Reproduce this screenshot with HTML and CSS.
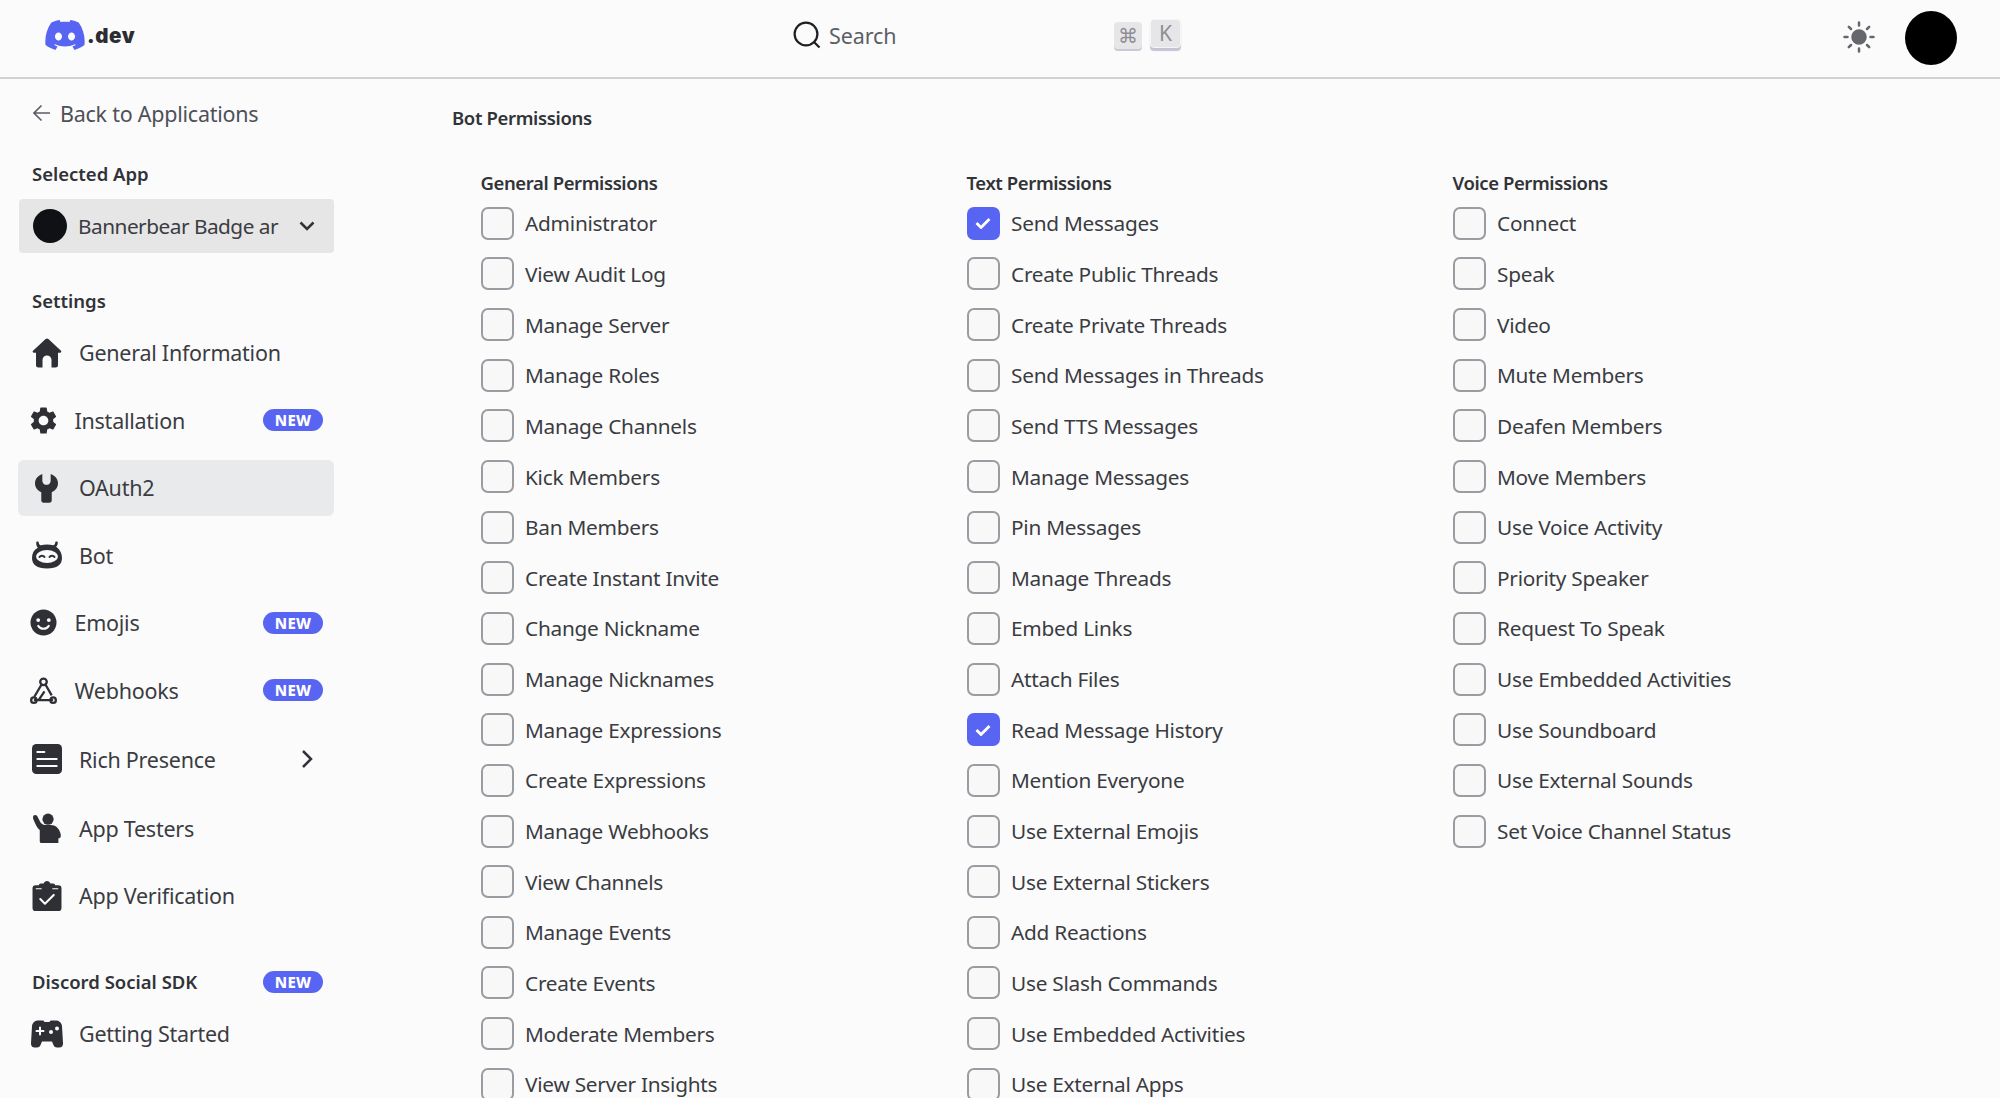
FILE: index.html
```html
<!DOCTYPE html>
<html lang="en">
<head>
    <meta charset="UTF-8">
    <title>Bot Permissions</title>
    <link rel="stylesheet" href="styles.css">
</head>
<body>
    <header class="topbar">
        <div class="logo">
            <svg class="logo-mark" viewBox="0 0 24 18.3"><path transform="translate(0 -2.9)" d="M20.317 4.3698a19.7913 19.7913 0 00-4.8851-1.5152.0741.0741 0 00-.0785.0371c-.211.3753-.4447.8648-.6083 1.2495-1.8447-.2762-3.68-.2762-5.4868 0-.1636-.3933-.4058-.8742-.6177-1.2495a.077.077 0 00-.0785-.037 19.7363 19.7363 0 00-4.8852 1.515.0699.0699 0 00-.0321.0277C.5334 9.0458-.319 13.5799.0992 18.0578a.0824.0824 0 00.0312.0561c2.0528 1.5076 4.0413 2.4228 5.9929 3.0294a.0777.0777 0 00.0842-.0276c.4616-.6304.8731-1.2952 1.226-1.9942a.076.076 0 00-.0416-.1057c-.6528-.2476-1.2743-.5495-1.8722-.8923a.077.077 0 01-.0076-.1277c.1258-.0943.2517-.1923.3718-.2914a.0743.0743 0 01.0776-.0105c3.9278 1.7933 8.18 1.7933 12.0614 0a.0739.0739 0 01.0785.0095c.1202.099.246.1981.3728.2924a.077.077 0 01-.0066.1276 12.2986 12.2986 0 01-1.8732.8914.0766.0766 0 00-.0407.1067c.3604.698.7719 1.3628 1.225 1.9932a.076.076 0 00.0842.0286c1.961-.6067 3.9495-1.5219 6.0023-3.0294a.077.077 0 00.0313-.0552c.5004-5.177-.8382-9.6739-3.5485-13.6604a.061.061 0 00-.0312-.0286zM8.02 15.3312c-1.1825 0-2.1569-1.0857-2.1569-2.419 0-1.3332.9555-2.4189 2.157-2.4189 1.2108 0 2.1757 1.0952 2.1568 2.419 0 1.3332-.9555 2.4189-2.1569 2.4189zm7.9748 0c-1.1825 0-2.1569-1.0857-2.1569-2.419 0-1.3332.9554-2.4189 2.1569-2.4189 1.2108 0 2.1757 1.0952 2.1568 2.419 0 1.3332-.946 2.4189-2.1568 2.4189Z"/></svg>
            <span class="logo-text">.dev</span>
        </div>
        <div class="search">
            <svg class="search-icon" viewBox="0 0 28 28"><circle cx="13" cy="13" r="11.4"/><path d="M21 21l5.5 5.5"/></svg>
            <span class="search-label">Search</span>
        </div>
        <div class="keys">
            <span class="key">⌘</span>
            <span class="key key-raised">K</span>
        </div>
        <div class="topbar-right">
            <svg class="sun" viewBox="0 0 32 32"><circle cx="16" cy="16" r="6.500"/><path d="M16 1.500v3M16 27.500v3M1.500 16h3M27.500 16h3M5.800 5.800l2.200 2.200M24 24l2.200 2.200M5.800 26.200l2.200-2.200M24 8l2.200-2.200"/></svg>
            <span class="avatar"></span>
        </div>
    </header>

    <div class="page">
        <aside class="sidebar">
            <div class="back">
                <svg class="back-arrow" viewBox="0 0 18 18"><path d="M17 9H1.500M8.500 1.500L1 9l7.500 7.500"/></svg>
                <span>Back to Applications</span>
            </div>

            <h4 class="side-heading heading-app">Selected App</h4>
            <div class="app-select">
                <span class="app-avatar"></span>
                <span class="app-name">Bannerbear Badge ar</span>
                <svg class="chevron-down" viewBox="0 0 16 10"><path d="M1.500 1.500L8 8l6.500-6.500"/></svg>
            </div>

            <h4 class="side-heading heading-settings">Settings</h4>
            <nav class="nav">
                <div class="nav-item">
                    <svg class="nav-icon" viewBox="0 0 30 30"><path d="M15 .5c.5 0 1 .2 1.400.6L29 12.800c.7.7.2 2-.8 2H26V27a2.500 2.500 0 0 1-2.500 2.500H19.500v-7.500a4.500 4.500 0 0 0-9 0v7.500H6.500A2.500 2.500 0 0 1 4 27V14.800H1.800c-1 0-1.500-1.300-.8-2L13.600 1.100c.4-.4.900-.6 1.400-.6z"/></svg>
                    <span>General Information</span>
                </div>
                <div class="nav-item nav-item-small">
                    <svg class="nav-icon" viewBox="2 2 20 20"><path d="M19.140 12.940c.04-.3.06-.61.06-.94 0-.32-.02-.64-.07-.94l2.030-1.580c.18-.14.23-.41.12-.61l-1.920-3.320c-.12-.22-.37-.29-.59-.22l-2.390.96c-.5-.38-1.030-.7-1.620-.94l-.36-2.540c-.04-.24-.24-.41-.48-.41h-3.840c-.24 0-.43.17-.47.41l-.36 2.540c-.59.24-1.130.57-1.620.94l-2.390-.96c-.22-.08-.47 0-.59.22L2.740 8.870c-.12.21-.08.47.12.61l2.030 1.580c-.05.3-.09.63-.09.94s.02.64.07.94l-2.030 1.580c-.18.14-.23.41-.12.61l1.920 3.320c.12.22.37.29.59.22l2.390-.96c.5.38 1.030.7 1.620.94l.36 2.540c.05.24.24.41.48.41h3.840c.24 0 .44-.17.47-.41l.36-2.540c.59-.24 1.130-.56 1.620-.94l2.390.96c.22.08.47 0 .59-.22l1.920-3.320c.12-.22.07-.47-.12-.61l-2.010-1.580zM12 15.600c-1.980 0-3.600-1.620-3.600-3.600s1.620-3.600 3.600-3.600 3.600 1.620 3.600 3.600-1.620 3.600-3.600 3.600z"/></svg>
                    <span>Installation</span>
                    <span class="badge">NEW</span>
                </div>
                <div class="nav-item nav-item-active">
                    <svg class="nav-icon nav-icon-wrench" viewBox="0 0 22 28"><path d="M7 .5V7a4 4 0 0 0 8 0V.5c4 1.500 7 4.500 7 9 0 4-2.500 7-6 8.500v8a2 2 0 0 1-2 2H8a2 2 0 0 1-2-2v-8C2.500 16.500 0 13.500 0 9.500 0 5 3 2 7 .5z"/></svg>
                    <span>OAuth2</span>
                </div>
                <div class="nav-item">
                    <svg class="nav-icon" viewBox="0 0 30 27"><path d="M5.500 0c.8 0 1.300.6 1.300 1.200 0 1.200.7 2.200 2 2.600C10.600 3.300 12.700 3 15 3s4.400.3 6.200.8c1.300-.4 2-1.400 2-2.600 0-.6.5-1.200 1.300-1.200s1.300.6 1.300 1.200c0 1.500-.6 3-1.700 4C28 8.200 30 11.700 30 16.500 30 23 25 27 15 27S0 23 0 16.500c0-4.800 2-8.300 5.900-10.300C4.800 5.200 4.200 3.700 4.200 1.200 4.200.6 4.700 0 5.500 0z"/><ellipse class="cut" cx="15" cy="15" rx="11" ry="6.500"/><path class="eye" d="M7.500 15.500c1-1.800 4-1.800 5 0M17.500 15.500c1-1.800 4-1.800 5 0"/></svg>
                    <span>Bot</span>
                </div>
                <div class="nav-item nav-item-small">
                    <svg class="nav-icon" viewBox="0 0 28 28"><circle cx="14" cy="14" r="13.500"/><circle class="cut" cx="8.500" cy="11.500" r="2"/><circle class="cut" cx="19.500" cy="11.500" r="2"/><path class="smile" d="M8.500 17.500c2.500 4 8.500 4 11 0"/></svg>
                    <span>Emojis</span>
                    <span class="badge">NEW</span>
                </div>
                <div class="nav-item nav-item-small">
                    <svg class="nav-icon nav-icon-line" viewBox="0 0 28 28"><circle cx="14" cy="5" r="3.400"/><circle cx="4" cy="24" r="2.800"/><circle cx="24" cy="24" r="2.800"/><path d="M12 7.800L4.500 20.500M16 7.800l6.500 11.200M4 24h20M9 24l6-9"/></svg>
                    <span>Webhooks</span>
                    <span class="badge">NEW</span>
                </div>
                <div class="nav-item nav-item-push">
                    <svg class="nav-icon" viewBox="0 0 28 28"><path d="M4 0h20a4 4 0 0 1 4 4v20a4 4 0 0 1-4 4H4a4 4 0 0 1-4-4V4a4 4 0 0 1 4-4z"/><path class="smile" d="M5 7.500h6.500M5 14h18M5 20.500h18"/></svg>
                    <span>Rich Presence</span>
                    <svg class="chevron-right" viewBox="0 0 12 20"><path d="M2 2l8 8-8 8"/></svg>
                </div>
                <div class="nav-item nav-item-push">
                    <svg class="nav-icon" viewBox="0 0 28 29"><circle cx="15" cy="6" r="5.400"/><path d="M1 2.500c.9-.9 2.700-.8 3.500.3l3 6c.8 1.300 2 2.400 4 2.700h6c5 0 8 3 9.500 8 .4 1.600.4 2.500.2 3.500-.3 1-1.200 1.500-2.200 1.500v4.500H8.500c-.8 0-1.500-.7-1.500-1.500v-11C4.800 15 2.800 11 .7 5.800.4 4.700.4 3.300 1 2.500z"/></svg>
                    <span>App Testers</span>
                </div>
                <div class="nav-item">
                    <svg class="nav-icon" viewBox="0 0 28 29"><path d="M14 0c1.500 0 2.800 1 3.300 2.300H20c1 0 1.800.7 1.800 1.700H25a3 3 0 0 1 3 3v19a3 3 0 0 1-3 3H3a3 3 0 0 1-3-3V7a3 3 0 0 1 3-3h3.200c0-1 .8-1.700 1.800-1.700h2.700C11.200 1 12.500 0 14 0z"/><path class="smile" d="M7.500 17.500l4.500 4.500 8.500-8.500"/><path class="smile thin" d="M3.500 7.500h5M19.500 7.500h5"/></svg>
                    <span>App Verification</span>
                </div>
            </nav>

            <div class="side-heading-row">
                <h4 class="side-heading">Discord Social SDK</h4>
                <span class="badge">NEW</span>
            </div>
            <div class="nav-item nav-item-sdk">
                <svg class="nav-icon nav-icon-pad" viewBox="0 0 32 28"><path d="M7.500.5h4c1 0 1.700.6 2 1.500h5c.3-.9 1-1.500 2-1.500h4C28 .5 30.500 2.500 31 6l1 17c.2 3-1.500 4.500-3.500 4.500H26c-2 0-3-1-3.500-2.500l-1.500-3.500H11L9.500 25C9 26.500 8 27.500 6 27.500H3.500C1.500 27.500-.2 26 0 23L1 6C1.500 2.500 4 .500 7.500.5z"/><path class="smile" d="M5.500 11h7M9 7.500v7"/><circle class="cut" cx="20" cy="12" r="2"/><circle class="cut" cx="26" cy="8.500" r="2"/></svg>
                <span>Getting Started</span>
            </div>
        </aside>

        <main class="content">
            <h4 class="perm-title">Bot Permissions</h4>
            <div class="perm-grid">
                <section class="perm-col">
                    <h4 class="perm-heading">General Permissions</h4>
                    <label class="perm"><span class="box"></span>Administrator</label>
                    <label class="perm"><span class="box"></span>View Audit Log</label>
                    <label class="perm"><span class="box"></span>Manage Server</label>
                    <label class="perm"><span class="box"></span>Manage Roles</label>
                    <label class="perm"><span class="box"></span>Manage Channels</label>
                    <label class="perm"><span class="box"></span>Kick Members</label>
                    <label class="perm"><span class="box"></span>Ban Members</label>
                    <label class="perm"><span class="box"></span>Create Instant Invite</label>
                    <label class="perm"><span class="box"></span>Change Nickname</label>
                    <label class="perm"><span class="box"></span>Manage Nicknames</label>
                    <label class="perm"><span class="box"></span>Manage Expressions</label>
                    <label class="perm"><span class="box"></span>Create Expressions</label>
                    <label class="perm"><span class="box"></span>Manage Webhooks</label>
                    <label class="perm"><span class="box"></span>View Channels</label>
                    <label class="perm"><span class="box"></span>Manage Events</label>
                    <label class="perm"><span class="box"></span>Create Events</label>
                    <label class="perm"><span class="box"></span>Moderate Members</label>
                    <label class="perm"><span class="box"></span>View Server Insights</label>
                </section>
                <section class="perm-col">
                    <h4 class="perm-heading">Text Permissions</h4>
                    <label class="perm"><span class="box box-checked"><svg viewBox="0 0 16 12"><path d="M1.500 6l4.500 4.500 8.500-8.500"/></svg></span>Send Messages</label>
                    <label class="perm"><span class="box"></span>Create Public Threads</label>
                    <label class="perm"><span class="box"></span>Create Private Threads</label>
                    <label class="perm"><span class="box"></span>Send Messages in Threads</label>
                    <label class="perm"><span class="box"></span>Send TTS Messages</label>
                    <label class="perm"><span class="box"></span>Manage Messages</label>
                    <label class="perm"><span class="box"></span>Pin Messages</label>
                    <label class="perm"><span class="box"></span>Manage Threads</label>
                    <label class="perm"><span class="box"></span>Embed Links</label>
                    <label class="perm"><span class="box"></span>Attach Files</label>
                    <label class="perm"><span class="box box-checked"><svg viewBox="0 0 16 12"><path d="M1.500 6l4.500 4.500 8.500-8.500"/></svg></span>Read Message History</label>
                    <label class="perm"><span class="box"></span>Mention Everyone</label>
                    <label class="perm"><span class="box"></span>Use External Emojis</label>
                    <label class="perm"><span class="box"></span>Use External Stickers</label>
                    <label class="perm"><span class="box"></span>Add Reactions</label>
                    <label class="perm"><span class="box"></span>Use Slash Commands</label>
                    <label class="perm"><span class="box"></span>Use Embedded Activities</label>
                    <label class="perm"><span class="box"></span>Use External Apps</label>
                </section>
                <section class="perm-col">
                    <h4 class="perm-heading">Voice Permissions</h4>
                    <label class="perm"><span class="box"></span>Connect</label>
                    <label class="perm"><span class="box"></span>Speak</label>
                    <label class="perm"><span class="box"></span>Video</label>
                    <label class="perm"><span class="box"></span>Mute Members</label>
                    <label class="perm"><span class="box"></span>Deafen Members</label>
                    <label class="perm"><span class="box"></span>Move Members</label>
                    <label class="perm"><span class="box"></span>Use Voice Activity</label>
                    <label class="perm"><span class="box"></span>Priority Speaker</label>
                    <label class="perm"><span class="box"></span>Request To Speak</label>
                    <label class="perm"><span class="box"></span>Use Embedded Activities</label>
                    <label class="perm"><span class="box"></span>Use Soundboard</label>
                    <label class="perm"><span class="box"></span>Use External Sounds</label>
                    <label class="perm"><span class="box"></span>Set Voice Channel Status</label>
                </section>
            </div>
        </main>
    </div>
</body>
</html>
```

FILE: styles.css
```css
* { box-sizing: border-box; }
html, body { height: 100%; }
body {
    margin: 0;
    height: 1098px;
    overflow: hidden;
    background: #fbfbfb;
    color: #313338;
    font-family: "Noto Sans", "Open Sans", sans-serif;
    font-size: 21px;
}
h4 { margin: 0; }

/* top bar */
.topbar {
    display: flex;
    align-items: center;
    height: 79px;
    padding: 0 43px 0 45px;
    border-bottom: 2px solid #d2d2d3;
}
.logo { display: flex; align-items: center; width: 748px; margin-top: -7px; }
.logo-mark { width: 40px; height: 30px; fill: #5865f2; }
.logo-text { margin-left: 2px; font-family: "Inter", sans-serif; font-size: 20.500px; font-weight: 900; letter-spacing: .6px; color: #2b2d31; }
.search { display: flex; align-items: center; width: 321px; margin-top: -7px; }
.search-icon { width: 28px; height: 28px; fill: none; stroke: #1e1f22; stroke-width: 2.200; }
.search-label { margin-left: 8px; color: #5c5e66; font-size: 21.500px; letter-spacing: -.1px; }
.keys { display: flex; align-items: flex-start; gap: 8px; margin-top: -10px; }
.key {
    display: flex;
    align-items: center;
    justify-content: center;
    width: 28px;
    height: 27px;
    margin-top: 3px;
    border-radius: 4px;
    background: #e6e6e8;
    box-shadow: 0 2px 0 #c9c9d8;
    color: #8e8f95;
    font-size: 20px;
}
.key-raised { width: 31px; height: 29px; margin-top: 0; border: 1px solid #f5f5f5; box-shadow: 0 3px 1px #c4c4d4; font-size: 21px; }
.topbar-right { display: flex; align-items: center; gap: 29px; margin-left: auto; }
.sun { width: 32px; height: 32px; fill: #66676d; stroke: #66676d; stroke-width: 2.500; stroke-linecap: round; margin-top: -3px; margin-right: 1px; }
.avatar { width: 52px; height: 54px; margin-top: -2px; border-radius: 50%; background: #000; }

/* layout */
.page { display: flex; height: 1019px; }
.sidebar { width: 350px; flex: none; padding: 0 16px 0 18px; }
.content { flex: 1; padding: 26px 0 0 102px; overflow: hidden; }

/* sidebar */
.back { display: flex; align-items: center; gap: 9px; height: 28px; margin: 20px 0 0 15px; font-size: 21.500px; letter-spacing: -.25px; color: #4e5058; }
.back-arrow { width: 18px; height: 18px; fill: none; stroke: #5c5e66; stroke-width: 1.600; }
.side-heading { font-size: 18.500px; font-weight: 600; color: #313338; }
.heading-app { margin: 34px 0 0 14px; line-height: 26px; }
.app-select {
    display: flex;
    align-items: center;
    width: 315px;
    height: 54px;
    margin: 12px 0 0 1px;
    padding-left: 14px;
    border-radius: 4px;
    background: #e6e6e6;
}
.app-avatar { width: 34px; height: 34px; border-radius: 50%; background: #101114; }
.app-name { margin-left: 11px; font-size: 20.800px; letter-spacing: -.5px; white-space: nowrap; color: #3a3c42; }
.chevron-down { width: 16px; height: 10px; margin-left: auto; margin-right: 19px; fill: none; stroke: #313338; stroke-width: 2.500; }
.heading-settings { margin: 35px 0 0 14px; line-height: 26px; }

.nav { margin-top: 10.500px; }
.nav-item {
    display: flex;
    align-items: center;
    width: 316px;
    height: 56px;
    margin-bottom: 11.500px;
    padding: 0 11px 0 14px;
    border-radius: 6px;
    font-size: 21.500px;
    letter-spacing: -.25px;
    color: #3a3c42;
}
.nav-icon { width: 30px; height: 30px; margin-right: 17px; flex: none; fill: #2f3036; }
.nav-icon .cut { fill: #fbfbfb; }
.nav-icon .eye { fill: none; stroke: #2f3036; stroke-width: 2; stroke-linecap: round; }
.nav-icon .smile { fill: none; stroke: #fbfbfb; stroke-width: 2; stroke-linecap: round; stroke-linejoin: round; }
.nav-icon .thin { stroke-width: 1; }
.nav-icon-line { fill: none; stroke: #2f3036; stroke-width: 2.400; }
.nav-icon-wrench { width: 23px; margin-left: 3px; margin-right: 21px; }
.nav-icon-pad { width: 32px; margin-left: -1px; margin-right: 16px; }
.nav-item-small { padding-left: 12px; }
.nav-item-small .nav-icon { width: 27px; height: 27px; margin-right: 17.500px; }
.nav-item-active { background: #e9eaec; }
.nav-item-push { margin-top: 13px; }
.badge {
    display: inline-block;
    width: 60px;
    height: 22px;
    margin-left: auto;
    border-radius: 11px;
    background: #5865f2;
    color: #fff;
    font-size: 15px;
    font-weight: 800;
    line-height: 22px;
    letter-spacing: .2px;
    text-align: center;
}
.chevron-right { width: 12px; height: 20px; margin-left: auto; margin-right: 10px; fill: none; stroke: #313338; stroke-width: 2.500; }
.side-heading-row { display: flex; align-items: center; width: 291px; margin: 45.500px 0 0 14px; }
.nav-item-sdk { margin-top: 11.500px; }

/* permissions */
.perm-title { font-size: 18.500px; font-weight: 600; letter-spacing: -.35px; line-height: 26px; }
.perm-grid { display: grid; grid-template-columns: repeat(3, 486px); margin: 39px 0 0 28.500px; }
.perm-heading { font-size: 18.500px; font-weight: 600; letter-spacing: -.4px; line-height: 26px; margin-bottom: 2px; }
.perm { display: flex; align-items: center; height: 50.650px; font-size: 20.800px; letter-spacing: -.25px; color: #3a3c42; }
.box {
    display: flex;
    align-items: center;
    justify-content: center;
    width: 33px;
    height: 33px;
    margin-right: 11.500px;
    flex: none;
    border: 2px solid #9b9ca2;
    border-radius: 7px;
    background: #f8f8f8;
}
.box-checked { border-color: #5865f2; background: #5865f2; }
.box svg { width: 16px; height: 12px; fill: none; stroke: #fff; stroke-width: 2.800; }
```
